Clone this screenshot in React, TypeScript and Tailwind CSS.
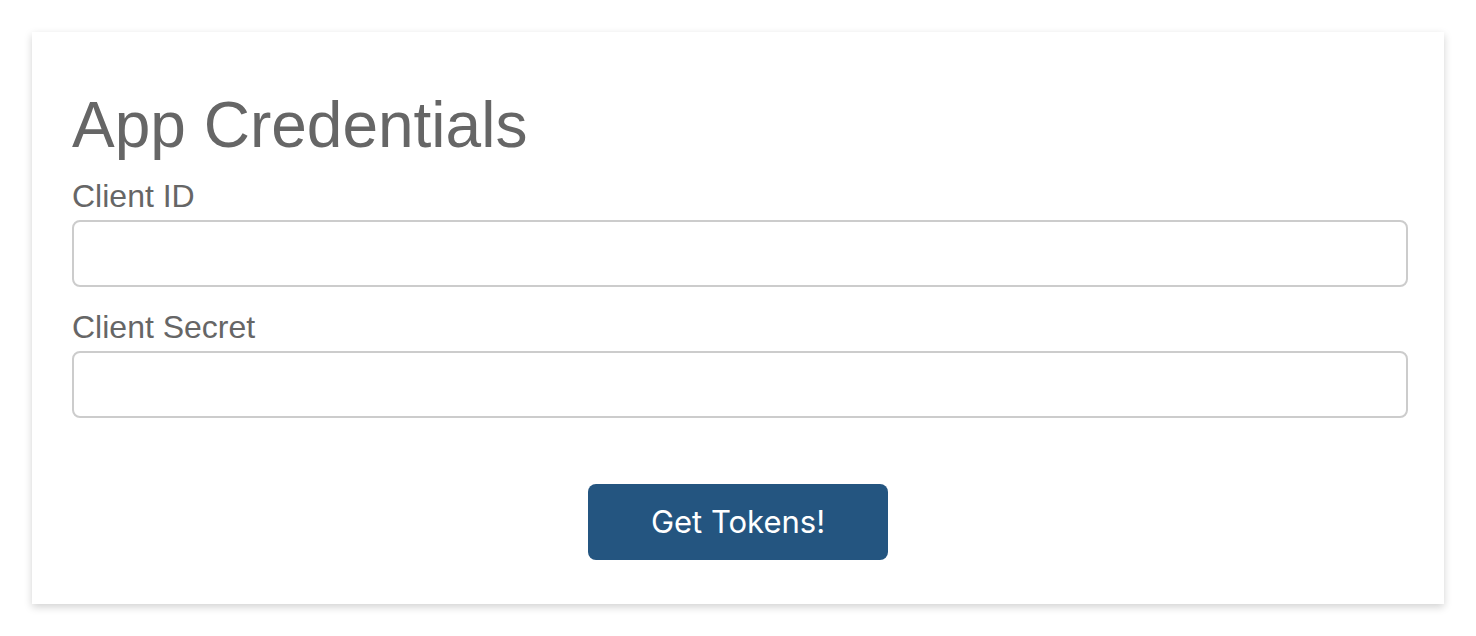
import React from "react";

function Field({ label, id }: { label: string; id: string }) {
  return (
    <div className="flex flex-col">
      <label htmlFor={id} className="text-[32px] leading-[32px] text-[#666666] mb-[8px]">
        {label}
      </label>
      <input
        id={id}
        type="text"
        className="h-[67px] w-full rounded-[8px] border-2 border-[#cccccc] bg-white px-4 text-[28px] text-[#555] outline-none"
      />
    </div>
  );
}

export default function App() {
  return (
    <div className="min-h-screen bg-white p-8" style={{ fontFamily: '"Liberation Sans", Arial, sans-serif' }}>
      <div className="bg-white shadow-[0_3px_8px_rgba(0,0,0,0.18)] pt-[61px] pb-[44px] pl-10 pr-9">
        <h1 className="text-[64px] leading-[64px] text-[#666666] font-normal mb-[23px]">App Credentials</h1>
        <div className="flex flex-col gap-[24px]">
          <Field label="Client ID" id="client-id" />
          <Field label="Client Secret" id="client-secret" />
        </div>
        <div className="flex justify-center mt-[66px] -ml-1">
          <button
            type="button"
            className="w-[300px] h-[76px] rounded-[8px] bg-[#245580] text-white text-[31px]"
            style={{ fontFamily: "Inter, sans-serif" }}
          >
            Get Tokens!
          </button>
        </div>
      </div>
    </div>
  );
}
